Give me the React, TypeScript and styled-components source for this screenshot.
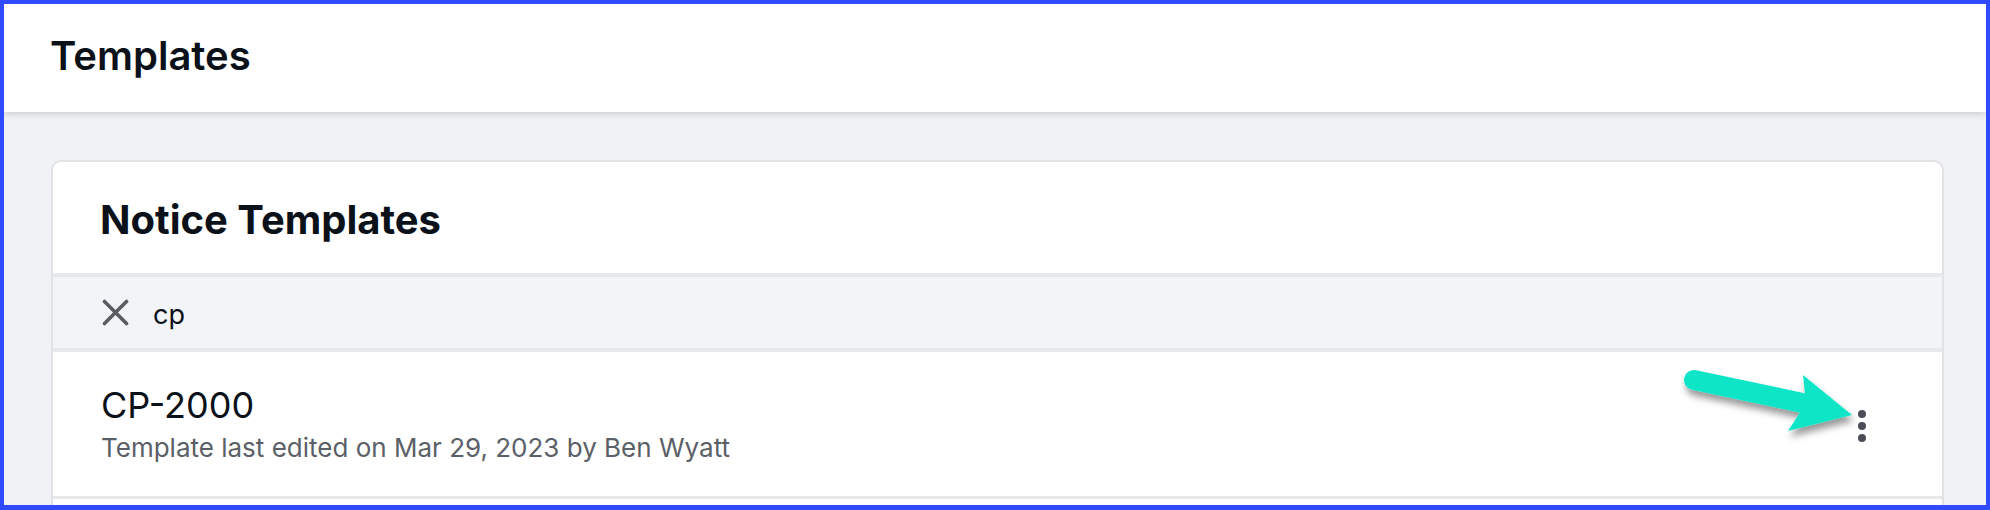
import React from "react";
import styled, { createGlobalStyle } from "styled-components";

const GlobalStyle = createGlobalStyle`
  *, *::before, *::after { box-sizing: border-box; }
  html, body { margin: 0; padding: 0; background: #f1f2f5; }
  body { font-family: Inter, "Noto Sans", "Liberation Sans", sans-serif; }
`;

const Frame = styled.div`
  height: 510px;
  border: 4px solid #2f4bfd;
  border-bottom-width: 5px;
  display: flex;
  flex-direction: column;
  overflow: hidden;
  background: #f1f2f5;
`;

const TopBar = styled.header`
  height: 108px;
  flex: none;
  background: #ffffff;
  display: flex;
  align-items: center;
  padding: 0 0 4px 46px;
  box-shadow: 0 2px 7px rgba(0, 0, 0, 0.16);
  position: relative;
  z-index: 2;
`;

const PageTitle = styled.h1`
  margin: 0;
  font-size: 40px;
  line-height: 1;
  font-weight: 600;
  color: #0b1119;
`;

const Main = styled.main`
  flex: 1;
  min-height: 0;
  padding: 48px 42px 0 47px;
`;

const Card = styled.section`
  background: #ffffff;
  border: 2px solid #e1e2e4;
  border-bottom: none;
  border-radius: 10px 10px 0 0;
  height: 100%;
  overflow: hidden;
`;

const CardHeader = styled.div`
  height: 111px;
  display: flex;
  align-items: center;
  padding: 5px 0 0 47px;
`;

const CardTitle = styled.h2`
  margin: 0;
  font-size: 40px;
  line-height: 1;
  font-weight: 700;
  color: #0b1119;
`;

const SearchBar = styled.div`
  height: 75px;
  background: #f3f4f7;
  border-top: 4px solid #e7e8ea;
  display: flex;
  align-items: center;
  gap: 24px;
  padding: 0 0 0 49px;
`;

const ClearButton = styled.button`
  border: none;
  background: none;
  padding: 0;
  width: 27px;
  height: 27px;
  display: flex;
  color: #595c62;
  cursor: pointer;
`;

const Query = styled.span`
  font-size: 27px;
  line-height: 1;
  color: #0b1119;
  padding-top: 3px;
`;

const Row = styled.div`
  position: relative;
  height: 148px;
  border-top: 4px solid #e7e8ea;
  display: flex;
  align-items: center;
  justify-content: space-between;
  padding: 3px 76px 0 48px;
`;

const RowText = styled.div`
  display: flex;
  flex-direction: column;
`;

const RowTitle = styled.div`
  font-size: 36px;
  line-height: 44px;
  font-weight: 400;
  color: #0b1119;
`;

const RowMeta = styled.div`
  font-size: 26px;
  line-height: 42px;
  color: #5b5f67;
`;

const MenuButton = styled.button`
  border: none;
  background: none;
  padding: 0;
  width: 8px;
  height: 32px;
  display: flex;
  color: #4a4e56;
  cursor: pointer;
`;

const Callout = styled.svg`
  position: absolute;
  left: 1617px;
  top: 4px;
  width: 200px;
  height: 90px;
  overflow: visible;
  pointer-events: none;
`;

const NextRow = styled.div`
  height: 60px;
  border-top: 3px solid #e7e8ea;
`;

export default function App() {
  return (
    <>
      <GlobalStyle />
      <Frame>
        <TopBar>
          <PageTitle>Templates</PageTitle>
        </TopBar>
        <Main>
          <Card>
            <CardHeader>
              <CardTitle>Notice Templates</CardTitle>
            </CardHeader>
            <SearchBar>
              <ClearButton aria-label="Clear search">
                <svg width="27" height="27" viewBox="0 0 27 27">
                  <path
                    d="M2.5 2.5 L24.5 24.5 M24.5 2.5 L2.5 24.5"
                    stroke="currentColor"
                    strokeWidth="3.6"
                    strokeLinecap="round"
                    fill="none"
                  />
                </svg>
              </ClearButton>
              <Query>cp</Query>
            </SearchBar>
            <Row>
              <RowText>
                <RowTitle>CP-2000</RowTitle>
                <RowMeta>Template last edited on Mar 29, 2023 by Ben Wyatt</RowMeta>
              </RowText>
              <MenuButton aria-label="More options">
                <svg width="8" height="32" viewBox="0 0 8 32">
                  <circle cx="4" cy="4" r="4" fill="currentColor" />
                  <circle cx="4" cy="16" r="4" fill="currentColor" />
                  <circle cx="4" cy="28" r="4" fill="currentColor" />
                </svg>
              </MenuButton>
              <Callout viewBox="1670 356 200 90">
                <defs>
                  <filter id="arrowShadow" x="-20%" y="-40%" width="140%" height="180%">
                    <feDropShadow dx="2" dy="6" stdDeviation="3.5" floodColor="#000" floodOpacity="0.4" />
                  </filter>
                </defs>
                <g filter="url(#arrowShadow)" fill="#0fe5c6">
                  <path
                    d="M1694 380 L1812 405"
                    stroke="#0fe5c6"
                    strokeWidth="20"
                    strokeLinecap="round"
                  />
                  <polygon points="1803,375 1852,415 1788,431 1806,403" />
                </g>
              </Callout>
            </Row>
            <NextRow />
          </Card>
        </Main>
      </Frame>
    </>
  );
}
